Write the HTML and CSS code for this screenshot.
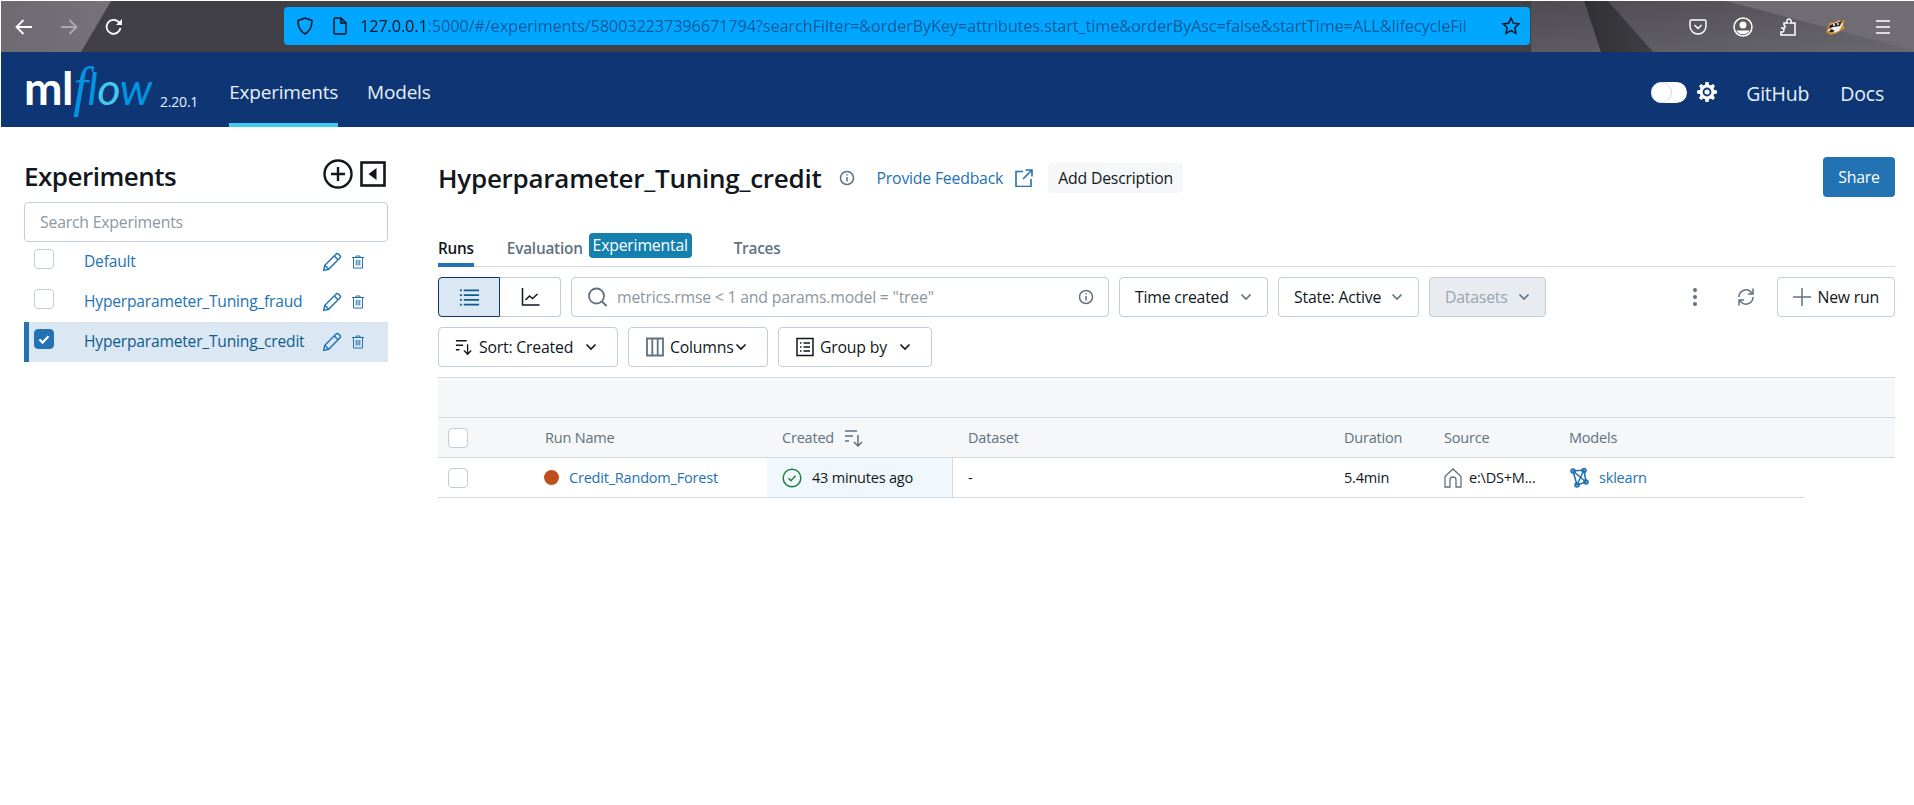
FILE: index.html
```html
<!DOCTYPE html>
<html lang="en">
<head>
  <meta charset="UTF-8" />
  <title>MLflow</title>
  <link rel="stylesheet" href="styles.css">
</head>
<body>
  <div class="browser">
    <svg class="browser-bg" viewBox="0 0 1914 51" width="1914" height="51" preserveAspectRatio="none">
      <defs>
        <linearGradient id="lightLeft" x1="0" x2="1" y1="0" y2="0"><stop offset="0" stop-color="#6d6b71"/><stop offset="1" stop-color="#757379"/></linearGradient>
        <linearGradient id="rightSide" x1="0" x2="1" y1="0" y2="1"><stop offset="0" stop-color="#4e4c52"/><stop offset="1" stop-color="#6a686f"/></linearGradient>
        <linearGradient id="wedge" x1="0" x2="1" y1="0" y2="0"><stop offset="0" stop-color="#313034"/><stop offset="1" stop-color="#3f3e43"/></linearGradient>
      </defs>
      <rect width="1914" height="51" fill="#414046"/>
      <polygon points="0,0 110,0 80,51 0,51" fill="url(#lightLeft)"/>
      <polygon points="1530,0 1914,0 1914,51 1530,51" fill="url(#rightSide)"/>
      <polygon points="1583,0 1607,0 1652,51 1600,51" fill="url(#wedge)"/>
      <polygon points="1725,0 1914,0 1914,50" fill="#6f6d73"/>
    </svg>
    <div class="nav-buttons">
      <svg class="nav-icon" viewBox="0 0 20 20"><path d="M18 10H2.500M9.500 3l-7 7 7 7"/></svg>
      <svg class="nav-icon dim" viewBox="0 0 20 20"><path d="M2 10h15.500M10.500 3l7 7-7 7"/></svg>
      <svg class="nav-icon" viewBox="0 0 20 20"><path d="M16.500 11a7 7 0 1 1-2-6.200L17 7"/><path class="solid" d="M18 2v6h-6z"/></svg>
    </div>
    <div class="urlbar">
      <svg class="url-icon" viewBox="0 0 20 20"><path d="M10 2l7 2.500c0 6-1.500 10.500-7 13.500-5.500-3-7-7.500-7-13.500z"/></svg>
      <svg class="url-icon last" viewBox="0 0 20 20"><path d="M4 3.500a1.500 1.500 0 0 1 1.500-1.500H11l5 5v9.500a1.500 1.500 0 0 1-1.500 1.500h-9A1.500 1.500 0 0 1 4 16.500zM11 2v5h5"/></svg>
      <div class="url-text"><b>127.0.0.1</b>:5000/#/experiments/580032237396671794?searchFilter=&amp;orderByKey=attributes.start_time&amp;orderByAsc=false&amp;startTime=ALL&amp;lifecycleFil</div>
      <svg class="url-star" viewBox="0 0 20 20"><path d="M10 2l2.400 5.200 5.600.700-4.100 3.900 1.100 5.600-5-2.800-5 2.800 1.100-5.600L2 7.900l5.600-.7z"/></svg>
    </div>
    <div class="tools">
      <svg class="tool" viewBox="0 0 20 20"><path d="M3.500 3h13A1.500 1.500 0 0 1 18 4.500V9a8 8 0 0 1-16 0V4.500A1.500 1.500 0 0 1 3.500 3zM6.500 8l3.500 3.500L13.500 8"/></svg>
      <svg class="tool" viewBox="0 0 20 20"><circle cx="10" cy="10" r="9"/><circle class="solid" cx="10" cy="8" r="3.500"/><path class="solid" d="M3.500 13.500h13a7.500 7.500 0 0 1-13 0z"/></svg>
      <svg class="tool" viewBox="0 0 20 20"><path d="M3 11h3c1.500 0 1.500-2.500 0-3V6h3.500c-1-1-1-4 1.500-4s2.500 3 1.500 4H17v12H3v-3c2 .5 3-.5 3-2s-1-2-3-2"/></svg>
      <svg class="tool badger" viewBox="0 0 20 20"><path d="M0 15L4 5l3 1 6-3 2 1 4-1-2 5 2 3-8 5-6 2z" fill="#d98a2b"/><path d="M2 14l3-7 9-3 3 3-4 7-6 2z" fill="#f3f0ea"/><path d="M4 8l12-4-2 5-7 1-4 2z" fill="#222"/><circle cx="8" cy="8" r="1" fill="#fff"/><circle cx="12" cy="7" r="1" fill="#fff"/><path d="M3 15l4 .5 1.500-2L5 12z" fill="#222"/></svg>
      <svg class="tool" viewBox="0 0 20 20"><path d="M3 4h14M3 10h14M3 16h14"/></svg>
    </div>
  </div>

  <header class="topbar">
    <a class="logo"><span class="logo-ml">ml</span><span class="logo-f">f</span><span class="logo-flow">l<i>o</i>w</span></a>
    <span class="version">2.20.1</span>
    <nav class="mainnav">
      <a class="active">Experiments</a>
      <a>Models</a>
    </nav>
    <div class="topbar-right">
      <span class="toggle"><span class="toggle-knob"></span></span>
      <svg class="gear" viewBox="0 0 20 20"><path d="M8.500 0h3l.5 2.700 1.600.7 2.300-1.500 2.100 2.100-1.500 2.300.7 1.600 2.800.6v3l-2.800.5-.7 1.600 1.500 2.300-2.100 2.100-2.300-1.500-1.600.7-.5 2.800h-3L8 17.200l-1.600-.7-2.300 1.500L2 15.900l1.500-2.300-.7-1.600-2.800-.5v-3l2.800-.6.7-1.600L2 4l2.100-2.100 2.300 1.500L8 2.700z"/><circle cx="10" cy="10" r="3.500" fill="#fff" stroke="#0e3574" stroke-width="1.800"/></svg>
      <a class="gh">GitHub</a>
      <a>Docs</a>
    </div>
  </header>

  <div class="page">
    <aside class="sidebar">
      <div class="sidebar-head">
        <h2>Experiments</h2>
        <svg class="add-icon" viewBox="0 0 30 30"><circle cx="15" cy="15" r="13.500"/><path d="M15 8v14M8 15h14"/></svg>
        <svg class="collapse-icon" viewBox="0 0 26 26"><rect x="1.500" y="1.500" width="23" height="23"/><path class="solid" d="M16.500 7v12L8.500 13z"/></svg>
      </div>
      <input class="exp-search" placeholder="Search Experiments" />
      <ul class="exp-list">
        <li class="exp-row">
          <span class="check"></span>
          <a>Default</a>
          <svg class="pencil" viewBox="0 0 18 18"><path d="M1.500 16.500l1-4.500L12.500 2a1.800 1.800 0 0 1 2.500 0l1 1a1.800 1.800 0 0 1 0 2.500L6 15.500zM2.500 12L6 15.500M11 3.500L14.500 7"/></svg>
          <svg class="trash" viewBox="0 0 12 14"><path d="M0 2.500h12M4 2.500V1h4v1.500M1.500 2.500h9V13h-9zM4.200 5v5.500M6 5v5.500M7.800 5v5.500"/></svg>
        </li>
        <li class="exp-row">
          <span class="check"></span>
          <a>Hyperparameter_Tuning_fraud</a>
          <svg class="pencil" viewBox="0 0 18 18"><path d="M1.500 16.500l1-4.500L12.500 2a1.800 1.800 0 0 1 2.500 0l1 1a1.800 1.800 0 0 1 0 2.500L6 15.500zM2.500 12L6 15.500M11 3.500L14.500 7"/></svg>
          <svg class="trash" viewBox="0 0 12 14"><path d="M0 2.500h12M4 2.500V1h4v1.500M1.500 2.500h9V13h-9zM4.200 5v5.500M6 5v5.500M7.800 5v5.500"/></svg>
        </li>
        <li class="exp-row selected">
          <span class="check checked"><svg viewBox="0 0 20 20"><path d="M5 10.500l3.500 3.500L15 7"/></svg></span>
          <a>Hyperparameter_Tuning_credit</a>
          <svg class="pencil" viewBox="0 0 18 18"><path d="M1.500 16.500l1-4.500L12.500 2a1.800 1.800 0 0 1 2.500 0l1 1a1.800 1.800 0 0 1 0 2.500L6 15.500zM2.500 12L6 15.500M11 3.500L14.500 7"/></svg>
          <svg class="trash" viewBox="0 0 12 14"><path d="M0 2.500h12M4 2.500V1h4v1.500M1.500 2.500h9V13h-9zM4.200 5v5.500M6 5v5.500M7.800 5v5.500"/></svg>
        </li>
      </ul>
    </aside>

    <main class="content">
      <div class="title-row">
        <h1>Hyperparameter_Tuning_credit</h1>
        <svg class="info" viewBox="0 0 16 16"><circle cx="8" cy="8" r="6.500"/><path d="M8 7v4.500M8 4.200v1.300"/></svg>
        <a class="feedback">Provide Feedback</a>
        <svg class="external" viewBox="0 0 18 18"><path d="M8 2.500H1v15h15V10M10.500 1H17v6.500M17 1L8 10"/></svg>
        <button class="add-desc">Add Description</button>
        <button class="share">Share</button>
      </div>

      <div class="tabs">
        <a class="tab active">Runs</a>
        <a class="tab">Evaluation</a>
        <span class="pill">Experimental</span>
        <a class="tab traces">Traces</a>
      </div>

      <div class="toolbar">
        <div class="segmented">
          <span class="seg on"><svg class="ico" viewBox="0 0 22 20"><path d="M1 3h2M5 3h16M1 8h2M5 8h16M1 13h2M5 13h16M1 18h2M5 18h16"/></svg></span>
          <span class="seg"><svg class="ico dark" viewBox="0 0 20 20"><path d="M2 1v17h17M5 13l4-4 3 2.500L17 7"/></svg></span>
        </div>
        <div class="filter">
          <svg class="ico grey" viewBox="0 0 20 20"><circle cx="9" cy="9" r="7.500"/><path d="M14.500 14.500L19 19"/></svg>
          <span class="filter-text">metrics.rmse &lt; 1 and params.model = "tree"</span>
          <svg class="info" viewBox="0 0 16 16"><circle cx="8" cy="8" r="6.500"/><path d="M8 7v4.500M8 4.200v1.300"/></svg>
        </div>
        <button class="btn w-time">Time created <svg class="chev" viewBox="0 0 12 8"><path d="M1.500 1.500L6 6l4.500-4.500"/></svg></button>
        <button class="btn w-state">State: Active <svg class="chev" viewBox="0 0 12 8"><path d="M1.500 1.500L6 6l4.500-4.500"/></svg></button>
        <button class="btn disabled w-data">Datasets <svg class="chev" viewBox="0 0 12 8"><path d="M1.500 1.500L6 6l4.500-4.500"/></svg></button>
        <span class="toolbar-right">
          <svg class="kebab" viewBox="0 0 4 20"><circle class="solid" cx="2" cy="3" r="2"/><circle class="solid" cx="2" cy="10" r="2"/><circle class="solid" cx="2" cy="17" r="2"/></svg>
          <svg class="refresh" viewBox="0 0 18 20"><path d="M2 10a7 7 0 0 1 12-5l1.500 2M16 10a7 7 0 0 1-12 5l-1.500-2M16 1.500V7h-5M2 18.500V13h5"/></svg>
          <button class="btn new-run"><svg class="plus" viewBox="0 0 18 18"><path d="M9 0v18M0 9h18"/></svg>New run</button>
        </span>
      </div>

      <div class="toolbar">
        <button class="btn w-sort"><svg class="ico dark small" viewBox="0 0 20 18"><path d="M1 2h12M1 7h8M1 12h4M14 6v11M10 13l4 4 4-4"/></svg>Sort: Created <svg class="chev dark" viewBox="0 0 12 8"><path d="M1.500 1.500L6 6l4.500-4.500"/></svg></button>
        <button class="btn w-cols"><svg class="ico grey small" viewBox="0 0 18 20"><path d="M1 1.500h16v17H1zM6.300 1.500v17M11.700 1.500v17"/></svg>Columns <svg class="chev dark" viewBox="0 0 12 8"><path d="M1.500 1.500L6 6l4.500-4.500"/></svg></button>
        <button class="btn w-group"><svg class="ico dark small" viewBox="0 0 18 20"><path d="M1 1.500h16v17H1zM4 6h1.500M7.500 6H14M4 10h1.500M7.500 10H14M4 14h1.500M7.500 14H14"/></svg>Group by <svg class="chev dark" viewBox="0 0 12 8"><path d="M1.500 1.500L6 6l4.500-4.500"/></svg></button>
      </div>

      <div class="band"></div>
      <div class="grid-row head">
        <div class="cell"><span class="check"></span></div>
        <div class="cell">Run Name</div>
        <div class="cell">Created <svg class="sort-ico" viewBox="0 0 20 18"><path d="M1 2h12M1 7h8M1 12h4M14 6v11M10 13l4 4 4-4"/></svg></div>
        <div class="cell">Dataset</div>
        <div class="cell">Duration</div>
        <div class="cell">Source</div>
        <div class="cell">Models</div>
      </div>
      <div class="grid-row body">
        <div class="cell"><span class="check"></span></div>
        <div class="cell"><span class="dot"></span><a>Credit_Random_Forest</a></div>
        <div class="cell created"><svg class="status" viewBox="0 0 20 20"><circle cx="10" cy="10" r="8.800"/><path d="M6.500 10.200l2.500 2.500 4.500-5"/></svg>43 minutes ago</div>
        <div class="cell">-</div>
        <div class="cell">5.4min</div>
        <div class="cell"><svg class="home" viewBox="0 0 18 20"><path d="M1 8.500L9 1l8 7.500V19h-5v-7a3 3 0 0 0-6 0v7H1z"/></svg>e:\DS+M...</div>
        <div class="cell"><svg class="model" viewBox="0 0 20 20"><path d="M4 3l11 -1 2 12-9 3zM4 3l13 11M15 2L8 17"/><circle cx="4" cy="3" r="2"/><circle cx="15" cy="2.500" r="2"/><circle cx="17" cy="14" r="2"/><circle cx="8" cy="17" r="2"/></svg><a>sklearn</a></div>
      </div>
    </main>
  </div>
</body>
</html>
```

FILE: styles.css
```css
* {
  box-sizing: border-box;
}
body {
  margin: 0;
  padding: 1px 0 0 1px;
  background: #fff;
  color: #11171c;
  font-family: "Open Sans", "Noto Sans", sans-serif;
  font-size: 15.800px;
  letter-spacing: -0.2px;
  overflow: hidden;
}
a {
  color: #2272b4;
  text-decoration: none;
}
svg {
  fill: none;
  stroke: currentColor;
  flex: none;
}
svg .solid {
  fill: currentColor;
  stroke: none;
}

/* browser chrome */
.browser {
  position: relative;
  display: flex;
  align-items: center;
  height: 51px;
}
.browser-bg {
  position: absolute;
  left: 0;
  top: 0;
  stroke: none;
}
.nav-buttons {
  position: relative;
  display: flex;
  gap: 25px;
  padding-left: 13px;
  color: #fff;
}
.nav-icon {
  width: 20px;
  height: 20px;
  stroke-width: 1.800;
}
.nav-icon.dim {
  opacity: 0.4;
}
.urlbar {
  position: relative;
  display: flex;
  align-items: center;
  margin: -1px 0 0 160px;
  width: 1246px;
  height: 38px;
  padding: 0 9px 0 11px;
  background: #00a6ff;
  border-radius: 4px;
  color: #0c1420;
}
.url-icon {
  width: 20px;
  height: 20px;
  margin-right: 15px;
  stroke-width: 1.500;
}
.url-icon.last {
  margin-right: 10px;
}
.url-text {
  flex: 1;
  overflow: hidden;
  white-space: nowrap;
  color: #085a97;
  font-size: 16.300px;
  letter-spacing: -0.120px;
  -webkit-mask-image: linear-gradient(to left, transparent 0, #000 36px);
  mask-image: linear-gradient(to left, transparent 0, #000 36px);
}
.url-text b {
  color: #08111c;
  font-weight: 400;
}
.url-star {
  width: 20px;
  height: 20px;
  margin-left: 7px;
  stroke-width: 1.500;
}
.tools {
  position: relative;
  display: flex;
  gap: 25px;
  margin-left: 158px;
  color: #fff;
}
.tool {
  width: 20px;
  height: 20px;
  stroke-width: 1.500;
}
.tool .solid {
  fill: #fff;
}
.badger {
  stroke: none;
  margin-left: 3px;
  margin-right: 2px;
}

/* mlflow header */
.topbar {
  display: flex;
  align-items: center;
  height: 75px;
  padding-left: 23px;
  background: #0e3574;
  color: #e6f1f9;
}
.logo {
  display: flex;
  align-items: baseline;
  width: 130px;
  margin-top: -4px;
  font-family: "Lato", sans-serif;
  font-size: 46px;
  line-height: 1;
  letter-spacing: -0.500px;
}
.logo-ml {
  color: #fff;
  font-weight: 700;
}
.logo-f {
  color: #0194e2;
  font-family: "Liberation Serif", serif;
  font-style: italic;
  font-size: 54px;
  line-height: 0;
}
.logo-flow {
  color: #0194e2;
  font-size: 45px;
  font-style: italic;
}
.logo-flow i {
  color: #43c9ed;
}
.version {
  margin: 23px 0 0 6px;
  font-size: 14px;
}
.mainnav {
  display: flex;
  gap: 29px;
  margin-left: 31px;
  align-self: stretch;
}
.mainnav a {
  display: flex;
  align-items: center;
  padding-top: 9px;
  border-bottom: 4px solid transparent;
  color: #e6f1f9;
  font-size: 19px;
}
.mainnav a.active {
  color: #e6f1f9;
  border-bottom-color: #43c9ed;
}
.topbar-right {
  display: flex;
  align-items: center;
  margin-left: auto;
  padding: 5px 30px 0 0;
}
.topbar-right a {
  color: #e6f1f9;
  font-size: 19.500px;
  margin-left: 31px;
  padding-top: 2px;
}
.topbar-right a.gh {
  margin-left: 29px;
}
.toggle {
  display: block;
  width: 36px;
  height: 21px;
  border-radius: 11px;
  background: #fff;
  position: relative;
}
.toggle-knob {
  position: absolute;
  left: 0;
  top: 0;
  width: 21px;
  height: 21px;
  border-radius: 50%;
  border: 1px solid #d1d9e1;
  background: #fff;
}
.gear {
  width: 20px;
  height: 20px;
  margin-left: 10px;
  fill: #fff;
  stroke: none;
}

/* page */
.page {
  display: flex;
}
.sidebar {
  width: 387px;
  padding: 30px 0 0 23px;
}
.sidebar-head {
  display: flex;
  align-items: center;
  height: 34px;
  margin-bottom: 11px;
  color: #11171c;
}
.sidebar-head h2 {
  flex: 1;
  margin: 0;
  font-size: 26px;
  font-weight: 600;
  letter-spacing: -0.500px;
  padding-top: 3px;
}
.add-icon {
  width: 30px;
  height: 30px;
  stroke-width: 2.400;
}
.collapse-icon {
  width: 26px;
  height: 26px;
  margin: 0 2px 0 7px;
  stroke-width: 2.600;
}
.exp-search {
  display: block;
  width: 364px;
  height: 40px;
  padding: 0 15px;
  border: 1px solid #c0cdd8;
  border-radius: 4px;
  font: inherit;
  letter-spacing: inherit;
}
.exp-search::placeholder {
  color: #8c97a2;
  opacity: 1;
}
.exp-list {
  list-style: none;
  margin: 0;
  padding: 0;
  width: 364px;
}
.exp-row {
  display: flex;
  align-items: center;
  height: 40px;
  padding-left: 10px;
  border-left: 5px solid transparent;
}
.exp-row a {
  width: 238px;
  margin-left: 30px;
  margin-top: -2px;
  font-size: 15.600px;
  white-space: nowrap;
}
.exp-row .check {
  margin-top: -6px;
  margin-left: -5px;
}
.exp-row.selected {
  background: #dbe7f2;
  border-left-color: #2272b4;
}
.exp-row.selected a {
  color: #0e5c8e;
}
.pencil {
  width: 20px;
  height: 20px;
  color: #2272b4;
  stroke-width: 1.300;
}
.trash {
  width: 12px;
  height: 14px;
  margin-left: 10px;
  color: #2272b4;
  stroke-width: 1;
}
.check {
  display: flex;
  align-items: center;
  justify-content: center;
  width: 20px;
  height: 20px;
  background: #fff;
  border: 1px solid #c0cdd8;
  border-radius: 4px;
}
.check.checked {
  background: #2272b4;
  border-color: #2272b4;
  color: #fff;
}
.check svg {
  width: 18px;
  height: 18px;
  stroke-width: 2.400;
}

/* main */
.content {
  flex: 1;
  margin-left: 50px;
  padding: 28px 19px 0 0;
}
.title-row {
  display: flex;
  align-items: center;
  height: 46px;
}
.title-row h1 {
  margin: 0;
  font-size: 26px;
  font-weight: 600;
  letter-spacing: -0.250px;
}
.info {
  width: 16px;
  height: 16px;
  color: #5f7281;
  stroke-width: 1.500;
}
.title-row .info {
  margin-left: 17px;
}
.feedback {
  margin-left: 22px;
}
.external {
  width: 18px;
  height: 18px;
  margin-left: 12px;
  color: #2272b4;
  stroke-width: 1.600;
}
.add-desc {
  margin-left: 15px;
  width: 135px;
  height: 30px;
  border: none;
  border-radius: 4px;
  background: #f5f7f8;
  font: inherit;
  letter-spacing: inherit;
  color: #11171c;
}
.share {
  margin: -2px 0 0 auto;
  width: 72px;
  height: 40px;
  border: none;
  border-radius: 4px;
  background: #2272b4;
  color: #fff;
  font: inherit;
  letter-spacing: inherit;
}
.tabs {
  display: flex;
  align-items: center;
  height: 35px;
  margin-top: 31px;
  border-bottom: 1px solid #d1d9e1;
}
.tab {
  display: flex;
  align-items: center;
  height: 35px;
  color: #5f7281;
  font-weight: 600;
  font-size: 15.300px;
  margin-right: 6px;
  border-bottom: 4px solid transparent;
  margin-bottom: -1px;
}
.tab.active {
  color: #11171c;
  border-bottom-color: #2272b4;
  margin-right: 33px;
}
.pill {
  height: 25px;
  width: 103px;
  line-height: 24px;
  margin-bottom: 7px;
  text-align: center;
  background: #1580ae;
  border-radius: 4px;
  color: #fff;
}
.tab.traces {
  margin-left: 42px;
}
.toolbar {
  display: flex;
  align-items: center;
  gap: 10px;
  margin-top: 10px;
}
.segmented {
  display: flex;
  width: 123px;
  height: 40px;
}
.seg {
  display: flex;
  align-items: center;
  justify-content: center;
  flex: 1;
  border: 1px solid #c0cdd8;
  border-left: none;
  border-radius: 0 4px 4px 0;
}
.seg.on {
  background: #dbe7f2;
  border: 1px solid #0e3574;
  border-radius: 4px 0 0 4px;
  color: #0e5c8e;
}
.ico {
  width: 21px;
  height: 20px;
  stroke-width: 1.800;
}
.ico.dark {
  color: #11171c;
  stroke-width: 1.500;
}
.ico.grey {
  color: #5f7281;
}
.ico.small {
  width: 18px;
  height: 20px;
  margin-right: 6px;
}
.filter {
  display: flex;
  align-items: center;
  width: 538px;
  height: 40px;
  padding: 0 14px 0 15px;
  border: 1px solid #c0cdd8;
  border-radius: 4px;
}
.filter-text {
  flex: 1;
  margin-left: 9px;
  color: #8c97a2;
}
.btn {
  display: flex;
  align-items: center;
  height: 40px;
  padding: 0 15px;
  background: #fff;
  border: 1px solid #c0cdd8;
  border-radius: 4px;
  font: inherit;
  letter-spacing: inherit;
  color: #11171c;
  white-space: nowrap;
}
.btn.disabled {
  background: #e8ecf0;
  color: #98a4af;
}
.chev {
  width: 12px;
  height: 8px;
  margin-left: auto;
  color: #5f7281;
  stroke-width: 1.600;
}
.chev.dark {
  color: #11171c;
}
.w-time { width: 149px; }
.w-state { width: 141px; }
.w-data { width: 117px; }
.w-sort { width: 180px; padding: 0 20px 0 16px; }
.w-cols { width: 140px; padding: 0 20px 0 17px; }
.w-group { width: 154px; padding: 0 20px 0 17px; }
.toolbar-right {
  display: flex;
  align-items: center;
  margin-left: auto;
}
.kebab {
  width: 4px;
  height: 20px;
  color: #5f7281;
}
.refresh {
  width: 18px;
  height: 20px;
  margin-left: 40px;
  color: #5f7281;
  stroke-width: 1.500;
}
.new-run {
  justify-content: space-between;
  width: 118px;
  margin-left: 22px;
}
.plus {
  width: 18px;
  height: 18px;
  color: #5f7281;
  stroke-width: 1.500;
}
.band {
  height: 41px;
  margin-top: 10px;
  background: #f5f7f8;
  border-top: 1px solid #d1d9e1;
  border-bottom: 1px solid #d1d9e1;
}
.grid-row {
  display: grid;
  grid-template-columns: 92px 237px 186px 376px 100px 125px 250px;
  align-items: stretch;
  height: 40px;
  border-bottom: 1px solid #d1d9e1;
  font-size: 14.500px;
}
.grid-row.head {
  background: #f5f7f8;
  color: #5f7281;
}
.grid-row.body {
  width: 1366px;
}
.cell {
  display: flex;
  align-items: center;
  padding-left: 15px;
  white-space: nowrap;
}
.cell:first-child {
  padding-left: 10px;
}
.sort-ico {
  width: 20px;
  height: 18px;
  margin-left: 10px;
  color: #5f7281;
  stroke-width: 1.500;
}
.dot {
  width: 15px;
  height: 15px;
  margin: 0 10px 0 -1px;
  background: #bd4f1c;
  border-radius: 50%;
}
.created {
  background: #f0f7fd;
  border-right: 1px solid #d1d9e1;
}
.status {
  width: 20px;
  height: 20px;
  margin-right: 10px;
  color: #277c43;
  stroke-width: 1.500;
}
.home {
  width: 18px;
  height: 20px;
  margin-right: 7px;
  color: #5f7281;
  stroke-width: 1.300;
}
.model {
  width: 20px;
  height: 20px;
  margin-right: 10px;
  color: #2272b4;
  stroke-width: 1.600;
}
```
